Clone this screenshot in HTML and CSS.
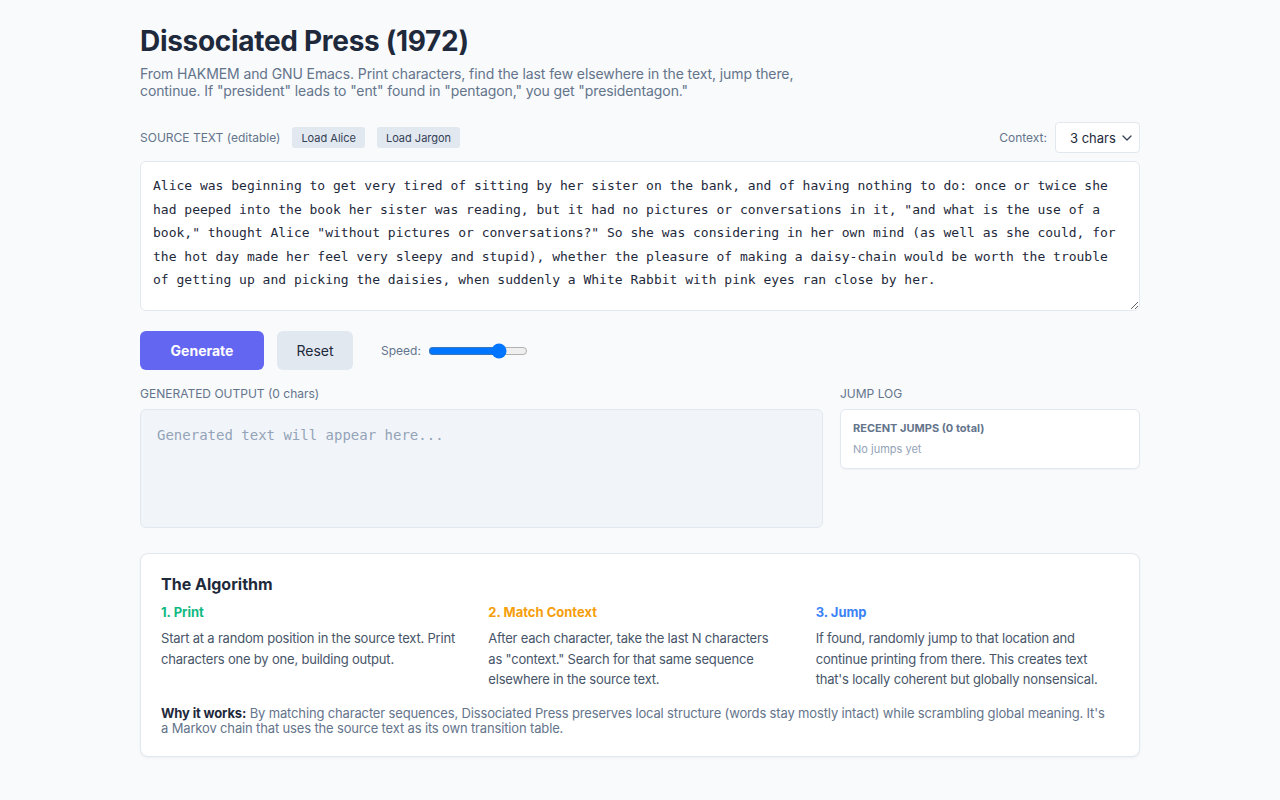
FILE: index.html
```html
<!DOCTYPE html>
<html lang="en">

<head>
    <meta charset="UTF-8">
    <meta name="viewport" content="width=device-width, initial-scale=1.0">
    <title>Dissociated Press (1972)</title>
    <link rel="stylesheet" href="styles.css">
</head>

<body>
    <div class="container">
        <h1>Dissociated Press (1972)</h1>
        <p class="intro">From HAKMEM and GNU Emacs. Print characters, find the last few elsewhere in the text, jump there,
            continue. If "president" leads to "ent" found in "pentagon," you get "presidentagon."</p>

        <div class="source-bar">
            <div class="source-left">
                <span class="label">SOURCE TEXT (editable)</span>
                <button class="small-btn">Load Alice</button>
                <button class="small-btn">Load Jargon</button>
            </div>
            <div class="source-right">
                <span class="label">Context:</span>
                <div class="select-wrap">
                    <select id="contextSize">
                        <option>2 chars</option>
                        <option selected>3 chars</option>
                        <option>4 chars</option>
                        <option>5 chars</option>
                    </select>
                    <svg class="chevron" width="10" height="6" viewBox="0 0 10 6"><path d="M1 1l4 4 4-4" fill="none" stroke="#334155" stroke-width="1.3" stroke-linecap="round" stroke-linejoin="round"/></svg>
                </div>
            </div>
        </div>

        <textarea id="sourceText" spellcheck="false">Alice was beginning to get very tired of sitting by her sister on the bank, and of having nothing to do: once or twice she had peeped into the book her sister was reading, but it had no pictures or conversations in it, "and what is the use of a book," thought Alice "without pictures or conversations?" So she was considering in her own mind (as well as she could, for the hot day made her feel very sleepy and stupid), whether the pleasure of making a daisy-chain would be worth the trouble of getting up and picking the daisies, when suddenly a White Rabbit with pink eyes ran close by her.</textarea>

        <div class="controls">
            <button class="btn primary">Generate</button>
            <button class="btn secondary">Reset</button>
            <label class="speed">Speed: <input type="range" min="1" max="100" value="75"></label>
        </div>

        <div class="output-grid">
            <div>
                <div class="label block">GENERATED OUTPUT (0 chars)</div>
                <div class="output-box"><span class="placeholder">Generated text will appear here...</span></div>
            </div>
            <div>
                <div class="label block">JUMP LOG</div>
                <div class="log-box">
                    <div class="log-title">RECENT JUMPS (0 total)</div>
                    <div class="log-empty">No jumps yet</div>
                </div>
            </div>
        </div>

        <div class="card">
            <h2>The Algorithm</h2>
            <div class="steps">
                <div class="step">
                    <h4 class="green">1. Print</h4>
                    <p>Start at a random position in the source text. Print characters one by one, building output.</p>
                </div>
                <div class="step">
                    <h4 class="orange">2. Match Context</h4>
                    <p>After each character, take the last N characters<br>as "context." Search for that same sequence elsewhere in the source text.</p>
                </div>
                <div class="step">
                    <h4 class="blue">3. Jump</h4>
                    <p>If found, randomly jump to that location and continue printing from there. This creates text that's locally coherent but globally nonsensical.</p>
                </div>
            </div>
            <p class="why"><strong>Why it works:</strong> By matching character sequences, Dissociated Press preserves local structure (words stay mostly intact) while scrambling global meaning. It's<br>a Markov chain that uses the source text as its own transition table.</p>
        </div>
    </div>
</body>

</html>
```

FILE: styles.css
```css
body {
    background: #f8fafc;
    font-family: Inter, "Noto Sans", sans-serif;
    color: #1e293b;
    margin: 0;
}

.container {
    width: 1000px;
    margin: 0 auto;
    padding: 24px 0 40px;
}

h1 {
    font-size: 28px;
    font-weight: 700;
    margin: 0 0 7px;
    color: #1e293b;
    letter-spacing: -0.3px;
}

.intro {
    font-size: 14px;
    line-height: 17px;
    color: #64748b;
    margin: 0 0 23px;
    max-width: 680px;
    letter-spacing: -0.1px;
}

.label {
    font-size: 12px;
    color: #64748b;
}

.label.block {
    display: block;
    margin-bottom: 8px;
}

.source-bar {
    display: flex;
    justify-content: space-between;
    align-items: center;
    margin-bottom: 8px;
}

.source-left,
.source-right {
    display: flex;
    align-items: center;
    gap: 12px;
}

.small-btn {
    font-family: Inter, sans-serif;
    font-size: 11px;
    color: #334155;
    background: #e2e8f0;
    border: none;
    border-radius: 3px;
    padding: 4px 9px;
    height: 21px;
    cursor: pointer;
}

.source-right {
    gap: 8px;
}

.select-wrap {
    position: relative;
}

select {
    appearance: none;
    -webkit-appearance: none;
    font-family: Inter, sans-serif;
    font-size: 13px;
    color: #1e293b;
    background: #fff;
    border: 1px solid #e2e8f0;
    border-radius: 4px;
    height: 31px;
    width: 85px;
    padding: 0 8px 0 14px;
    display: block;
}

.chevron {
    position: absolute;
    right: 8px;
    top: 13px;
    pointer-events: none;
}

textarea {
    display: block;
    box-sizing: border-box;
    width: 100%;
    height: 150px;
    padding: 12px;
    font-family: "DejaVu Sans Mono", monospace;
    font-size: 13px;
    line-height: 23.5px;
    color: #1e293b;
    background: #fff;
    border: 1px solid #e2e8f0;
    border-radius: 6px;
    resize: vertical;
    margin: 0 0 20px;
}

.controls {
    display: flex;
    align-items: center;
    gap: 13px;
    margin-bottom: 16px;
}

.btn {
    font-family: Inter, sans-serif;
    font-size: 14px;
    height: 39px;
    border: none;
    border-radius: 6px;
    cursor: pointer;
}

.btn.primary {
    background: #6366f1;
    color: #fff;
    font-weight: 700;
    width: 124px;
}

.btn.secondary {
    background: #e2e8f0;
    color: #1e293b;
    width: 76px;
}

.speed {
    display: flex;
    align-items: center;
    gap: 7px;
    font-size: 12px;
    color: #64748b;
    margin-left: 15px;
}

.speed input {
    width: 100px;
    margin: 0;
}

.output-grid {
    display: grid;
    grid-template-columns: 1fr 300px;
    gap: 17px;
    margin-bottom: 25px;
}

.output-box {
    box-sizing: border-box;
    height: 119px;
    background: #f1f5f9;
    border: 1px solid #e2e8f0;
    border-radius: 6px;
    padding: 17px 16px;
    font-family: "DejaVu Sans Mono", monospace;
    font-size: 14px;
}

.placeholder {
    color: #94a3b8;
}

.log-box {
    box-sizing: border-box;
    background: #fff;
    border: 1px solid #e2e8f0;
    border-radius: 6px;
    padding: 11px 12px 12px;
    box-shadow: 0 1px 2px rgba(0, 0, 0, 0.04);
}

.log-title {
    font-size: 11px;
    font-weight: 700;
    color: #64748b;
    margin-bottom: 7px;
}

.log-empty {
    font-size: 11px;
    color: #94a3b8;
}

.card {
    background: #fff;
    border: 1px solid #e2e8f0;
    border-radius: 8px;
    padding: 20px 20px 19px;
    box-shadow: 0 1px 3px rgba(0, 0, 0, 0.05);
}

.card h2 {
    font-size: 16px;
    font-weight: 700;
    margin: 0 0 10px;
    color: #1e293b;
}

.steps {
    display: grid;
    grid-template-columns: repeat(3, 1fr);
    gap: 24px;
    margin-bottom: 16px;
}

.step h4 {
    font-size: 13px;
    font-weight: 700;
    margin: 0 0 8px;
}

.step p {
    font-size: 13px;
    line-height: 20.5px;
    color: #475569;
    margin: 0;
    letter-spacing: -0.2px;
}

.green {
    color: #10b981;
}

.orange {
    color: #f59e0b;
}

.blue {
    color: #3b82f6;
}

.why {
    font-size: 13px;
    line-height: 15.5px;
    color: #64748b;
    margin: 0;
    letter-spacing: -0.15px;
}

.why strong {
    color: #1e293b;
}
```
